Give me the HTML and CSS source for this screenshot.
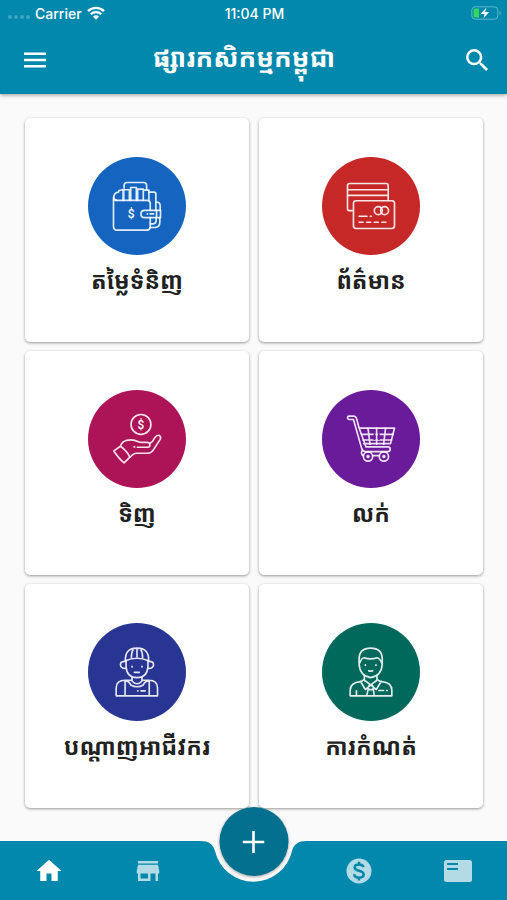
FILE: index.html
```html
<!DOCTYPE html>
<html lang="km">
<head>
<meta charset="utf-8">
<meta name="viewport" content="width=device-width, initial-scale=1">
<title>ផ្សារកសិកម្មកម្ពុជា</title>
<link rel="stylesheet" href="styles.css">
</head>
<body>
<header class="header">
  <div class="status">
    <div class="status-left">
      <span class="dots"><i></i><i></i><i></i><i></i></span>
      <span>Carrier</span>
      <svg class="wifi" viewBox="0 0 18 14" aria-hidden="true"><path d="M1 5.2a11.5 11.5 0 0 1 16 0M3.8 8.2a7.5 7.5 0 0 1 10.400 0" fill="none" stroke="#fff" stroke-width="2.300"/><path d="M9 13.800 6 10.600a4.200 4.200 0 0 1 6 0z" fill="#fff"/></svg>
    </div>
    <span class="time">11:04 PM</span>
    <div class="status-right">
      <svg class="battery" viewBox="0 0 30 14" aria-hidden="true"><rect x=".8" y=".8" width="26" height="12.400" rx="3.500" fill="none" stroke="#60b5cc"/><path d="M28.500 5v4q1.300-.7 1.300-2t-1.300-2z" fill="#60b5cc"/><path d="M4 2.500h4v9H4q-1.500 0-1.500-1.500V4q0-1.500 1.500-1.500z" fill="#34d65c"/><path d="M15.500 1.500 9.500 8h4l-1 4.500L18 6h-4z" fill="#fff"/></svg>
    </div>
  </div>
  <div class="appbar">
    <button class="icon-button" aria-label="ម៉ឺនុយ"><svg class="menu-icon" viewBox="0 0 24 16"><path d="M0 1.400h23M0 8h23M0 14.600h23" stroke="#fff" stroke-width="2.600"/></svg></button>
    <h1 class="title">ផ្សារកសិកម្មកម្ពុជា</h1>
    <button class="icon-button" aria-label="ស្វែងរក"><svg class="search-icon" viewBox="3 3 17.500 17.500"><path fill="#fff" d="M15.500 14h-.79l-.28-.27A6.470 6.470 0 0 0 16 9.500 6.500 6.500 0 1 0 9.500 16c1.610 0 3.090-.59 4.230-1.570l.27.28v.79l5 4.990L20.490 19l-4.990-5zm-6 0a4.500 4.500 0 1 1 0-9 4.500 4.500 0 0 1 0 9z"/></svg></button>
  </div>
</header>

<main class="grid">
  <a class="card" href="#price">
    <svg class="badge blue" viewBox="24 18 296 296" aria-hidden="true">
      <g class="line">
        <path d="M106 149h96q10 0 10 10v20M212 201v28q0 10-10 10h-90q-11 0-11-11v-88"/>
        <path d="M111 149q-10-2-9-12 2-12 14-13l2-5 12-3v33M132 149v-32h17v32M153 149v-39h17v39M174 149v-34h17v34M191 118h17v32"/>
        <path d="M133 112v-8q0-9 9-9h50q9 0 9 9v12M208 124h15q6 0 6 6v49M229 154q13 0 13 11v14M212 231h15q14-2 14-17v-13M212 220h9q9-1 9-11v-7"/>
        <path d="M243 179h-48q-11 0-11 11t11 11h48zM203 190h1M212 190h10M231 179v22"/>
      </g>
      <text class="coin" x="154" y="202">$</text>
    </svg>
    <span class="label">តម្លៃទំនិញ</span>
  </a>
  <a class="card" href="#news">
    <svg class="badge red" viewBox="26 18 296 296" aria-hidden="true">
      <g class="line">
        <path d="M117 180h-8q-6 0-6-6v-69q0-7 7-7h109q7 0 7 7v42M104 117h121M104 134h121"/>
        <rect x="121" y="150" width="124" height="84" rx="8"/>
        <circle cx="196" cy="180" r="12"/><circle cx="215" cy="180" r="12"/>
        <path d="M138 197h24M172 197h3M138 215h12M161 215h12M184 215h12M207 215h12"/>
      </g>
    </svg>
    <span class="label">ព័ត៌មាន</span>
  </a>
  <a class="card" href="#buy">
    <svg class="badge pink" viewBox="24 20 296 296" aria-hidden="true">
      <g class="line">
        <circle cx="184" cy="124" r="30"/>
        <path d="M102 204l20-14q11 7 20 19 8 10 7 15l-16 16q-15-12-31-36zM122 190q4-14 19-18 19-4 35 4 4 2 11 2h16q9 2 8 9-1 6-8 6h-30"/>
        <path d="M211 181q9-4 14-16 7-10 14-8 7 4 3 12l-20 31q-7 11-17 11h-34q-10 0-20 12"/>
        <path d="M163 192h2"/>
      </g>
      <text class="coin" x="184" y="137">$</text>
    </svg>
    <span class="label">ទិញ</span>
  </a>
  <a class="card" href="#sell">
    <svg class="badge purple" viewBox="26 20 296 296" aria-hidden="true">
      <g class="line">
        <path d="M138 135l-8-30q-2-6-8-6h-14q-5 0-5 5t5 5h13l25 88q3 9 10 9h69q7 0 7-7t-7-7h-66l-21-57h107l-12 47h-81"/>
        <path d="M145 154h96M150 171h86M165 136l6 48M191 136v48M218 136l-6 48"/>
        <circle cx="165" cy="221" r="14"/><circle cx="213" cy="221" r="14"/>
        <circle cx="165" cy="221" r="3"/><circle cx="213" cy="221" r="3"/>
        <path d="M148 202q-7 10 3 17M180 218h18"/>
      </g>
      <path d="M182 151h5v20h-5zM195 151h5v20h-5z" fill="#6a1b9a"/>
    </svg>
    <span class="label">លក់</span>
  </a>
  <a class="card" href="#sellers">
    <svg class="badge indigo" viewBox="114 20 296 296" aria-hidden="true">
      <g class="line">
        <path d="M227 134q-2-38 35-38t35 38q-35-15-70 0zM245 125q0-18 7-28M262 122v-26M279 125q0-18-7-28"/>
        <path d="M229 134v18q2 33 33 33t33-33v-18M228 136q-16-1-16 10 1 12 17 11M296 136q16-1 16 10-1 12-17 11"/>
        <path d="M247 184v11q15 17 30 0v-11M199 240v-23q0-24 27-24h21M277 193h21q26 0 26 24v23H199M226 194v46M299 194v46M226 195q12 0 17 12 19 11 38 0 5-12 18-12"/>
        <path d="M247 151v2M277 151v2M254 169h15M264 225h1M274 225h13"/>
      </g>
    </svg>
    <span class="label">បណ្តាញអាជីវករ</span>
  </a>
  <a class="card" href="#settings">
    <svg class="badge green" viewBox="26 20 296 296" aria-hidden="true">
      <g class="line">
        <path d="M138 143v-13q0-34 35-34t35 34v13q-2 37-35 42-33-5-35-42zM139 142q7-17 14-17 19 7 40 0 8 2 14 17"/>
        <path d="M154 179v14l19 14 19-14v-14M154 189q-6 7-12 8-31 3-31 27v16h126v-16q0-25-31-27-8-1-14-8M142 196l15 25 16-14M205 196l-15 25-17-14M168 209h11l5 31M168 209l-7 31M165 221h17"/>
        <path d="M157 146v2M189 146v2M167 164q6 3 12 0M198 224h14M221 224h2M130 225v14"/>
      </g>
    </svg>
    <span class="label">ការកំណត់</span>
  </a>
</main>

<nav class="nav">
  <div class="nav-group">
    <button class="nav-item active" aria-label="ទំព័រដើម"><svg class="nav-icon" viewBox="0 0 24 24"><path d="M10 20v-6h4v6h5v-8h3L12 3 2 12h3v8z"/></svg></button>
    <button class="nav-item" aria-label="ហាង"><svg class="nav-icon" viewBox="0 0 24 24"><path d="M20 4H4v2h16V4zm1 10v-2l-1-5H4l-1 5v2h1v6h10v-6h4v6h2v-6h1zm-9 4H6v-4h6v4z"/></svg></button>
  </div>
  <svg class="notch" viewBox="0 0 113 59" aria-hidden="true"><path d="M0 0h3C12 0 16 3 18 10A39.500 39.500 0 0 0 95 10C97 3 101 0 110 0h3v59H0z"/></svg>
  <div class="nav-group">
    <button class="nav-item" aria-label="តម្លៃ"><svg class="nav-icon" viewBox="0 0 24 24"><circle cx="12" cy="12" r="10"/><path class="cut" d="M15.600 8.900C15.200 7.400 13.900 6.700 12 6.700c-2.200 0-3.500 1-3.500 2.500 0 3.600 7.200 1.600 7.200 5.600 0 1.500-1.500 2.500-3.700 2.500-2.400 0-3.700-1.100-3.900-2.700M12 4.500v2.200m0 10.600v2.200"/></svg></button>
    <button class="nav-item" aria-label="អត្ថបទ"><svg class="nav-icon wide" viewBox="0 0 28 24"><rect x="0" y="1" width="28" height="22" rx="2.500"/><path class="cut" d="M3 5h11M3 10h11"/></svg></button>
  </div>
  <button class="fab" aria-label="បន្ថែម"><svg class="plus" viewBox="0 0 22 22"><path d="M11 0v22M0 11h22" stroke="#fff" stroke-width="2.600"/></svg></button>
</nav>
</body>
</html>
```
FILE: styles.css
```css
* { box-sizing: border-box; }

body {
  margin: 0;
  min-height: 100vh;
  display: flex;
  flex-direction: column;
  background: #fafafa;
  color: #212121;
  font-family: Inter, "Noto Sans Khmer", "Khmer OS", "Noto Sans", sans-serif;
}

button {
  padding: 0;
  border: 0;
  background: none;
  cursor: pointer;
}

svg { display: block; }

.header {
  background: #0288ad;
  color: #fff;
  box-shadow: 0 1px 4px rgba(0, 0, 0, 0.4);
}

.status {
  display: grid;
  grid-template-columns: 1fr auto 1fr;
  align-items: center;
  height: 26px;
  padding: 0 6px 0 8px;
  font-size: 14px;
  font-weight: 500;
}

.status-left {
  display: flex;
  align-items: center;
  gap: 5px;
}

.status-right {
  display: flex;
  justify-content: flex-end;
}

.dots {
  display: flex;
  gap: 2px;
  padding-top: 8px;
}

.dots i {
  width: 4px;
  height: 4px;
  border-radius: 50%;
  background: #40a5c1;
}

.wifi { width: 18px; height: 14px; }
.battery { width: 30px; height: 14px; }

.appbar {
  display: flex;
  align-items: center;
  height: 68px;
  padding: 0 10px 0 15px;
}

.icon-button {
  display: grid;
  place-items: center;
  width: 40px;
  height: 40px;
}

.menu-icon { width: 23px; height: 16px; }
.search-icon { width: 22px; height: 22px; }

.title {
  flex: 1;
  margin: 0;
  padding: 0 24px 4px 0;
  text-align: center;
  font-size: 26px;
  line-height: 40px;
  font-weight: 700;
  white-space: nowrap;
}

.grid {
  flex: 1;
  display: grid;
  grid-template-columns: 1fr 1fr;
  align-content: start;
  gap: 9px 10px;
  padding: 24px 24px 32px 25px;
}

.card {
  display: flex;
  flex-direction: column;
  align-items: center;
  aspect-ratio: 1;
  min-width: 0;
  padding-top: 39px;
  border-radius: 5px;
  background: #fff;
  box-shadow: 0 1px 3px rgba(0, 0, 0, 0.4);
  color: inherit;
  text-decoration: none;
}

.badge {
  width: 98px;
  height: 98px;
  border-radius: 50%;
}

.blue { background: #1565c0; }
.red { background: #c62828; }
.pink { background: #ad1457; }
.purple { background: #6a1b9a; }
.indigo { background: #283593; }
.green { background: #00695c; }

.line {
  fill: none;
  stroke: #fff;
  stroke-opacity: 0.88;
  stroke-width: 5;
  stroke-linecap: round;
  stroke-linejoin: round;
}

.coin {
  fill: #fff;
  font-family: Roboto, sans-serif;
  font-size: 36px;
  font-weight: 500;
  text-anchor: middle;
}

.label {
  margin-top: 6px;
  font-size: 23px;
  line-height: 40px;
  font-weight: 700;
  white-space: nowrap;
}

.nav {
  position: sticky;
  bottom: 0;
  display: flex;
  height: 59px;
}

.nav-group {
  flex: 1;
  display: flex;
  background: #0288ad;
}

.nav-item {
  flex: 1;
  display: grid;
  place-items: center;
  color: #b3dbe6;
}

.nav-item.active { color: #fff; }

.nav-icon {
  width: 30px;
  height: 30px;
  fill: currentColor;
}

.nav-icon.wide { width: 28px; height: 24px; }

.cut {
  fill: none;
  stroke: #0288ad;
  stroke-width: 2;
}

.notch {
  width: 113px;
  height: 59px;
  fill: #0288ad;
}

.fab {
  position: absolute;
  left: 50%;
  top: -34px;
  display: grid;
  place-items: center;
  width: 69px;
  height: 69px;
  border-radius: 50%;
  background: #02708e;
  box-shadow: 0 1px 3px rgba(0, 0, 0, 0.35);
  transform: translateX(-50%);
}

.plus { width: 22px; height: 22px; }
```
